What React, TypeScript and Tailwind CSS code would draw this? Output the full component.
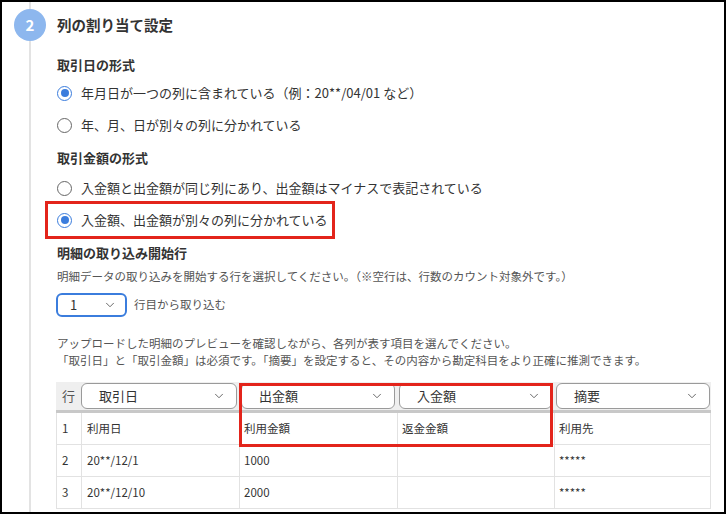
import { ChevronDown } from "lucide-react"

const font = { fontFamily: '"Noto Sans CJK JP", "Noto Sans", sans-serif' }

function Radio({ checked, label }: { checked?: boolean; label: string }) {
  return (
    <div className="flex h-[32px] items-center gap-[9px] pl-[0px]">
      {checked ? (
        <span className="flex size-[15px] items-center justify-center rounded-full border-[1.5px] border-[#3b7ddd] bg-white">
          <span className="size-[8px] rounded-full bg-[#3b7ddd]" />
        </span>
      ) : (
        <span className="size-[15px] rounded-full border-[1.5px] border-[#666]" />
      )}
      <span className="text-[13px] text-[#333]">{label}</span>
    </div>
  )
}

function HeaderSelect({ value }: { value: string }) {
  return (
    <div className="flex h-[26px] items-center justify-between rounded-[6px] border border-[#9a9a9a] bg-white pl-[17px] pr-[10px]">
      <span className="text-[13px] text-[#333]">{value}</span>
      <ChevronDown className="size-[14px] text-[#555]" strokeWidth={1.5} />
    </div>
  )
}

const rows = [
  { no: "1", date: "利用日", out: "利用金額", in: "返金金額", memo: "利用先" },
  { no: "2", date: "20**/12/1", out: "1000", in: "", memo: "*****" },
  { no: "3", date: "20**/12/10", out: "2000", in: "", memo: "*****" },
]

export default function App() {
  return (
    <div
      className="box-border flex h-[514px] w-[726px] overflow-hidden border-2 border-black bg-white pl-[11px]"
      style={font}
    >
      {/* Step timeline */}
      <div className="flex w-[34px] shrink-0 flex-col items-center">
        <div className="h-[7px] w-[2px] bg-[#e3e3e3]" />
        <div className="flex size-[32px] items-center justify-center rounded-full bg-[#8db7ee] text-[15px] font-bold text-white">
          2
        </div>
        <div className="w-[2px] flex-1 bg-[#e3e3e3]" />
      </div>

      <div className="ml-[10px] flex flex-1 flex-col pt-[7px]">
        <div className="flex h-[32px] items-center text-[14.5px] font-bold text-[#333]">
          列の割り当て設定
        </div>

        {/* Date format */}
        <div className="mt-[14px] h-[20px] text-[13px] font-bold leading-[20px] text-[#333]">
          取引日の形式
        </div>
        <div className="mt-[2px]">
          <Radio checked label="年月日が一つの列に含まれている（例：20**/04/01 など）" />
          <Radio label="年、月、日が別々の列に分かれている" />
        </div>

        {/* Amount format */}
        <div className="mt-[7px] h-[20px] text-[13px] font-bold leading-[20px] text-[#333]">
          取引金額の形式
        </div>
        <div className="mt-[4px]">
          <Radio label="入金額と出金額が同じ列にあり、出金額はマイナスで表記されている" />
          <div className="relative">
            <Radio checked label="入金額、出金額が別々の列に分かれている" />
            <div className="absolute -left-[12px] -top-[3px] h-[38px] w-[290px] border-[3px] border-[#e3241b]" />
          </div>
        </div>

        {/* Start row */}
        <div className="mt-[7px] h-[20px] text-[13px] font-bold leading-[20px] text-[#333]">
          明細の取り込み開始行
        </div>
        <div className="mt-[4px] h-[18px] text-[11.5px] leading-[18px] text-[#555]">
          明細データの取り込みを開始する行を選択してください。（※空行は、行数のカウント対象外です。）
        </div>
        <div className="mt-[8px] flex items-center gap-[7px]">
          <div className="-ml-px flex h-[24px] w-[71px] items-center justify-between rounded-[6px] border-2 border-[#3b7ddd] pl-[12px] pr-[8px]">
            <span className="text-[13px] text-[#333]">1</span>
            <ChevronDown className="size-[14px] text-[#555]" strokeWidth={1.5} />
          </div>
          <span className="text-[11.5px] text-[#555]">行目から取り込む</span>
        </div>

        <div className="mt-[18px] text-[11.5px] leading-[17px] text-[#555]">
          <p>アップロードした明細のプレビューを確認しながら、各列が表す項目を選んでください。</p>
          <p>「取引日」と「取引金額」は必須です。「摘要」を設定すると、その内容から勘定科目をより正確に推測できます。</p>
        </div>

        {/* Preview table */}
        <div className="relative -ml-px mt-[13px] w-[655px]">
          <div className="grid h-[31px] grid-cols-[25px_158px_158px_157px_157px] items-center border-b-[3px] border-[#c8c8c8] bg-[#efefef]">
            <span className="pl-[6px] text-[13px] text-[#555]">行</span>
            <div className="pl-[0px] pr-[2px]">
              <HeaderSelect value="取引日" />
            </div>
            <div className="pl-[2px] pr-[2px]">
              <HeaderSelect value="出金額" />
            </div>
            <div className="pl-[2px] pr-[2px]">
              <HeaderSelect value="入金額" />
            </div>
            <div className="pl-[2px] pr-[1px]">
              <HeaderSelect value="摘要" />
            </div>
          </div>
          {rows.map((row) => (
            <div
              key={row.no}
              className="grid h-[32px] grid-cols-[25px_158px_158px_157px_157px] border-x border-b border-[#e2e2e2] text-[11.5px] text-[#333]"
            >
              <span className="flex items-center border-r border-[#e2e2e2] pl-[5px]">{row.no}</span>
              <span className="flex items-center border-r border-[#e2e2e2] pl-[5px]">{row.date}</span>
              <span className="flex items-center border-r border-[#e2e2e2] pl-[4px]">{row.out}</span>
              <span className="flex items-center border-r border-[#e2e2e2] pl-[4px]">{row.in}</span>
              <span className="flex items-center pl-[4px]">{row.memo}</span>
            </div>
          ))}
          <div className="absolute left-[183px] top-[1px] h-[64px] w-[314px] border-[3px] border-[#e3241b]" />
        </div>
      </div>
    </div>
  )
}
